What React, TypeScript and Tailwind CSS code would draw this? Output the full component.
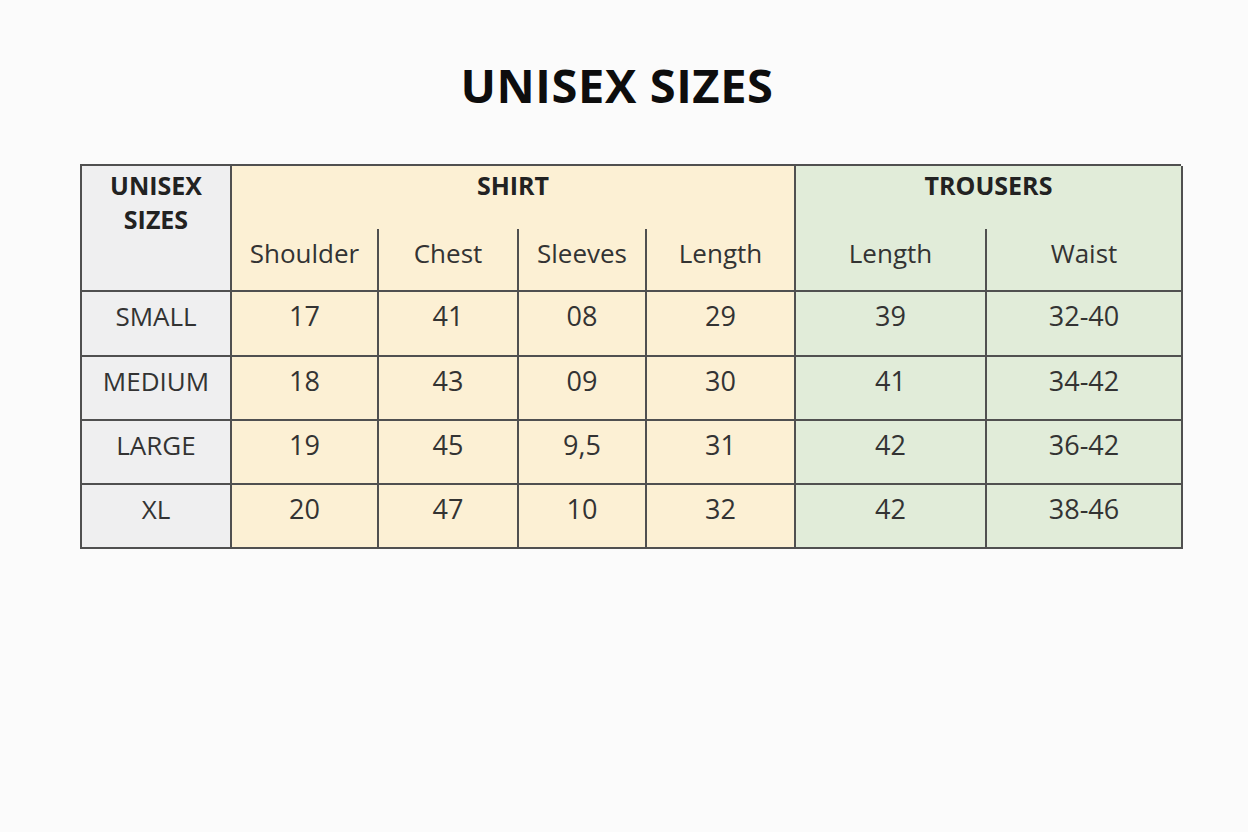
const shirtCols = ["Shoulder", "Chest", "Sleeves", "Length"];
const trouserCols = ["Length", "Waist"];

const rows = [
  { size: "SMALL", shirt: ["17", "41", "08", "29"], trousers: ["39", "32-40"] },
  { size: "MEDIUM", shirt: ["18", "43", "09", "30"], trousers: ["41", "34-42"] },
  { size: "LARGE", shirt: ["19", "45", "9,5", "31"], trousers: ["42", "36-42"] },
  { size: "XL", shirt: ["20", "47", "10", "32"], trousers: ["42", "38-46"] },
];

const line = "border-[#505050]";

export default function App() {
  return (
    <div
      className="min-h-[832px] w-[1248px] bg-[#fbfbfb] pt-[54px]"
      style={{ fontFamily: '"Open Sans", "Noto Sans", sans-serif' }}
    >
      <h1 className="pr-[14px] text-center text-[47px] font-bold leading-[62px] tracking-[0.6px] text-[#0d0d0d]">
        UNISEX SIZES
      </h1>

      <div
        className={`ml-[80px] mt-[48px] grid w-[1101px] grid-cols-[150px_147px_140px_128px_149px_191px_196px] grid-rows-[63px_63px_65px_64px_64px_64px] border-l-2 border-t-2 ${line} text-[#333]`}
      >
        <div
          className={`row-span-2 flex flex-col items-center border-b-2 border-r-2 ${line} bg-[#efeff0] pt-[2px] text-[25px] font-bold leading-[34px] text-[#222]`}
        >
          <span>UNISEX</span>
          <span>SIZES</span>
        </div>
        <div
          className={`col-span-4 flex justify-center border-r-2 ${line} bg-[#fcf0d4] pt-[2px] text-[25px] font-bold leading-[34px] text-[#222]`}
        >
          SHIRT
        </div>
        <div
          className={`col-span-2 flex justify-center border-r-2 ${line} bg-[#e1ecd9] pt-[2px] text-[25px] font-bold leading-[34px] text-[#222]`}
        >
          TROUSERS
        </div>

        {shirtCols.map((c) => (
          <div
            key={"s" + c}
            className={`flex items-center justify-center border-b-2 border-r-2 ${line} bg-[#fcf0d4] pb-[12px] text-[26px]`}
          >
            {c}
          </div>
        ))}
        {trouserCols.map((c) => (
          <div
            key={"t" + c}
            className={`flex items-center justify-center border-b-2 border-r-2 ${line} bg-[#e1ecd9] pb-[12px] text-[26px]`}
          >
            {c}
          </div>
        ))}

        {rows.map((r) => (
          <div key={r.size} className="contents">
            <div
              className={`flex items-center justify-center border-b-2 border-r-2 ${line} bg-[#efeff0] pb-[14px] text-[26px]`}
            >
              {r.size}
            </div>
            {r.shirt.map((v, i) => (
              <div
                key={i}
                className={`flex items-center justify-center border-b-2 border-r-2 ${line} bg-[#fcf0d4] pb-[14px] text-[27px]`}
              >
                {v}
              </div>
            ))}
            {r.trousers.map((v, i) => (
              <div
                key={i}
                className={`flex items-center justify-center border-b-2 border-r-2 ${line} bg-[#e1ecd9] pb-[14px] text-[27px]`}
              >
                {v}
              </div>
            ))}
          </div>
        ))}
      </div>
    </div>
  );
}
